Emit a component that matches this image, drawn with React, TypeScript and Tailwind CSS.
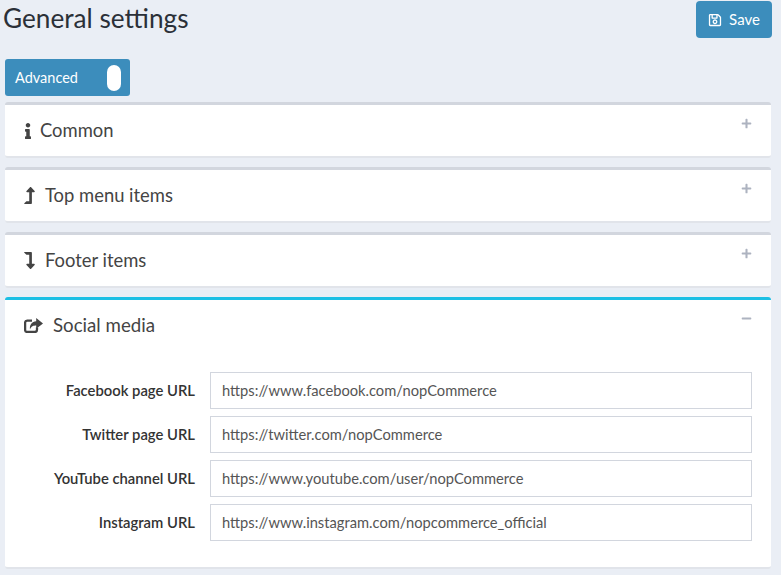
import { FaInfo, FaLevelUpAlt, FaLevelDownAlt, FaRegSave, FaPlus, FaMinus } from "react-icons/fa";
import type { ReactNode } from "react";

const font = "font-['Lato','Noto_Sans',sans-serif]";

function Collapsed({ icon, title, gap }: { icon: ReactNode; title: string; gap: string }) {
  return (
    <div className="h-[56px] bg-white rounded-[3px] border-t-[3px] border-t-[#d2d6de] border-b-2 border-b-[#e1e4ea] flex justify-between pl-[19px] pr-[19px]">
      <div className={`flex items-center h-[51px] text-[18.4px] text-[#444] ${gap}`}>
        {icon}
        <span>{title}</span>
      </div>
      <FaPlus className="mt-[13px] w-[11px] h-[11px] text-[#adb3c0]" />
    </div>
  );
}

function Row({ label, value }: { label: string; value: string }) {
  return (
    <div className="flex items-center gap-[15px] h-[37px]">
      <label className="w-[190px] text-right text-[14.8px] font-semibold text-[#333]">{label}</label>
      <div className="flex-1 h-[37px] bg-white border border-[#d2d6de] flex items-center px-[11px] text-[14.7px] text-[#555]">
        {value}
      </div>
    </div>
  );
}

function ShareIcon() {
  return (
    <svg viewBox="0 0 19 15" className="w-[19px] h-[15px] text-[#444]" fill="currentColor">
      <path d="M8 2.6H3.2A2.2 2.2 0 0 0 1.1 4.8v7.2A2.2 2.2 0 0 0 3.2 14h7.6a2.2 2.2 0 0 0 2.2-2.2V9.6" fill="none" stroke="currentColor" strokeWidth="2.3" />
      <path d="M12.2 0 19 5.4 12.2 10.8V7.6C9.4 7.6 7.2 8.2 6 11.6 5.3 6.8 8 3.4 12.2 3.2Z" />
    </svg>
  );
}

export default function App() {
  return (
    <div className={`w-[781px] h-[575px] overflow-hidden bg-[#eaeef5] ${font} px-[5px] pt-px`}>
      <div className="flex justify-between items-start pr-[4px] h-[58px]">
        <h1 className="text-[26.2px] leading-[35px] text-[#2b3038] -ml-[2px]">General settings</h1>
        <button className="w-[76px] h-[37px] rounded-[4px] bg-[#3c8dbc] text-white text-[15px] flex items-center justify-center gap-[7px]">
          <FaRegSave className="text-[14px]" />
          Save
        </button>
      </div>
      <div className="w-[125px] h-[37px] rounded-[3px] bg-[#3c8dbc] text-white text-[14.5px] flex items-center justify-between pl-[10px] pr-[9px]">
        <span>Advanced</span>
        <span className="w-[14px] h-[26px] bg-white rounded-full" />
      </div>
      <div className="flex flex-col gap-[9px] mt-[6px] w-[766px]">
        <Collapsed icon={<FaInfo className="w-[8px] h-[16px] text-[#444]" />} title="Common" gap="gap-[8px]" />
        <Collapsed icon={<FaLevelUpAlt className="w-[11px] h-[17px] text-[#444]" />} title="Top menu items" gap="gap-[10px]" />
        <Collapsed icon={<FaLevelDownAlt className="w-[11px] h-[17px] text-[#444]" />} title="Footer items" gap="gap-[10px]" />
        <div className="h-[272px] bg-white rounded-[3px] border-t-[3px] border-t-[#1cbfe4] border-b-2 border-b-[#e1e4ea]">
          <div className="flex justify-between pl-[19px] pr-[19px] h-[51px]">
            <div className="flex items-center gap-[10px] text-[18.7px] text-[#444]">
              <ShareIcon />
              <span>Social media</span>
            </div>
            <FaMinus className="mt-[13px] w-[11px] h-[11px] text-[#adb3c0]" />
          </div>
          <div className="flex flex-col gap-[7px] pt-[21px] pr-[19px]">
            <Row label="Facebook page URL" value="https://www.facebook.com/nopCommerce" />
            <Row label="Twitter page URL" value="https://twitter.com/nopCommerce" />
            <Row label="YouTube channel URL" value="https://www.youtube.com/user/nopCommerce" />
            <Row label="Instagram URL" value="https://www.instagram.com/nopcommerce_official" />
          </div>
        </div>
      </div>
    </div>
  );
}
